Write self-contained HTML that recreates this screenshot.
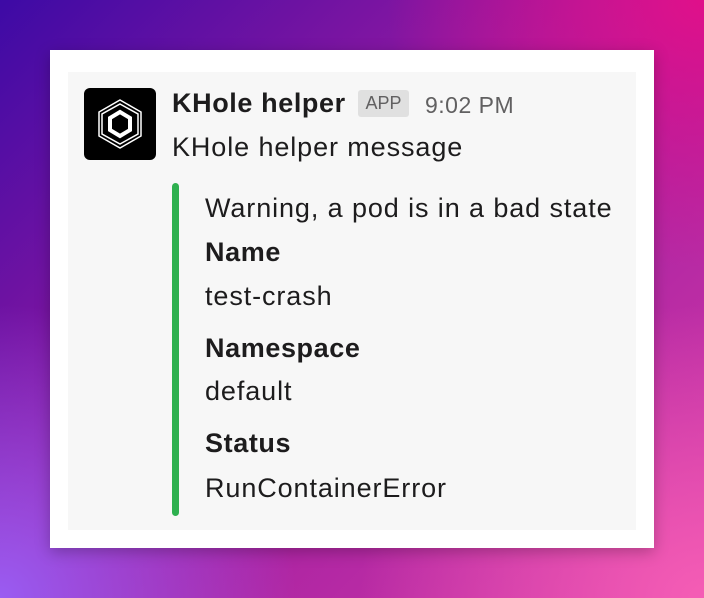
<!DOCTYPE html>
<html><head><meta charset="utf-8"><style>
html,body{margin:0;padding:0}
body{width:704px;height:598px;overflow:hidden;position:relative;font-family:"Liberation Sans",sans-serif;
background:
radial-gradient(ellipse 70% 70% at 100% 100%, #f55db5 0%, rgba(245,93,181,0) 70%),
radial-gradient(ellipse 60% 70% at 0% 100%, #9a5cf2 0%, rgba(154,92,242,0) 70%),
radial-gradient(ellipse 60% 60% at 100% 0%, #e0108a 0%, rgba(224,16,138,0) 75%),
linear-gradient(135deg,#3d0aa5 0%,#9a1aa0 45%,#d33aa8 100%);}
.card{position:absolute;left:50px;top:50px;width:604px;height:498px;background:#fff;box-shadow:0 4px 14px rgba(0,0,0,.25)}
.inner{position:absolute;left:18px;top:22px;width:568px;height:458px;background:#f7f7f7}
.av{position:absolute;left:16px;top:16px;width:72px;height:72px;background:#000;border-radius:6px}
.t{position:absolute;color:#1d1c1d;font-size:27px;letter-spacing:0.9px;white-space:nowrap;line-height:30px}
b{font-weight:bold;letter-spacing:0.6px}
.app{position:absolute;left:290px;top:18px;width:51px;height:27px;background:#e0e0e0;border-radius:3px;color:#616061;font-size:18px;text-align:center;line-height:27px}
.time{color:#616061;font-size:23px;letter-spacing:0.5px}
.bar{position:absolute;left:104px;top:111px;width:7px;height:333px;background:#2eb04f;border-radius:4px}
</style></head><body>
<div class="card"><div class="inner">
<div class="av"><svg width="72" height="72" viewBox="0 0 72 72">
<polygon points="36,12 57,24 57,48 36,60 15,48 15,24" fill="none" stroke="#fff" stroke-width="1.5"/>
<polygon points="36,16 54,26 54,46 36,56 18,46 18,26" fill="none" stroke="#fff" stroke-width="1.5"/>
<polygon points="36,24 46,30 46,42 36,48 26,42 26,30" fill="none" stroke="#fff" stroke-width="4"/>
</svg></div>
<div class="t" style="left:104px;top:16px"><b>KHole helper</b></div>
<div class="app">APP</div>
<div class="t time" style="left:357px;top:18px">9:02 PM</div>
<div class="t" style="left:104px;top:60px">KHole helper message</div>
<div class="bar"></div>
<div class="t" style="left:137px;top:121px">Warning, a pod is in a bad state</div>
<div class="t" style="left:137px;top:165px"><b>Name</b></div>
<div class="t" style="left:137px;top:209px">test-crash</div>
<div class="t" style="left:137px;top:261px"><b>Namespace</b></div>
<div class="t" style="left:137px;top:304px">default</div>
<div class="t" style="left:137px;top:356px"><b>Status</b></div>
<div class="t" style="left:137px;top:401px">RunContainerError</div>
</div></div>
</body></html>
